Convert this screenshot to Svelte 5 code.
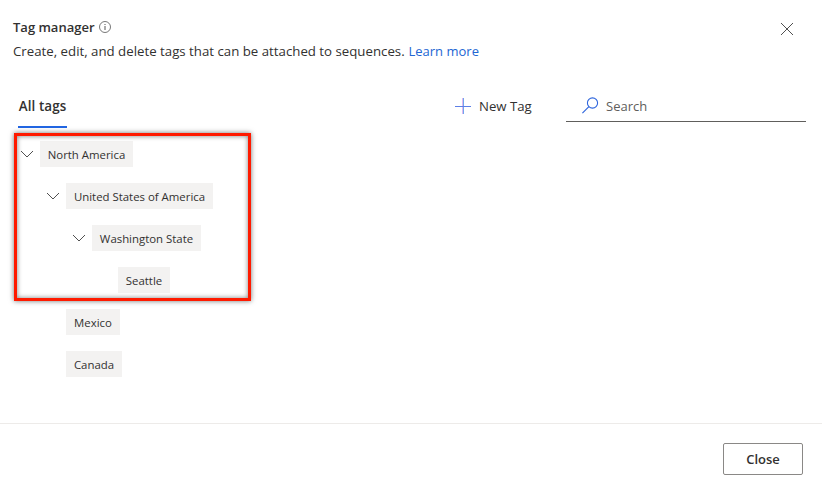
<script>
  const tags = [
    { name: 'North America', depth: 0, open: true, width: 93 },
    { name: 'United States of America', depth: 1, open: true, width: 147 },
    { name: 'Washington State', depth: 2, open: true, width: 109 },
    { name: 'Seattle', depth: 3, open: false, width: 52 },
    { name: 'Mexico', depth: 1, open: false, width: 54 },
    { name: 'Canada', depth: 1, open: false, width: 56 }
  ];
</script>

<div class="dialog">
  <header>
    <div class="heading">
      <div class="title">
        <h1>Tag manager</h1>
        <svg width="12" height="12" viewBox="0 0 12 12" fill="none" stroke="#555" stroke-width=".8">
          <circle cx="6" cy="6" r="5.5" />
          <path d="M6 5v4M6 3v1" stroke-width="1" />
        </svg>
      </div>
      <p><span class="description">Create, edit, and delete tags that can be attached to sequences.</span><a href="#learn">Learn more</a></p>
    </div>
    <button class="dismiss" aria-label="Dismiss">
      <svg width="14" height="14" viewBox="0 0 14 14" fill="none" stroke="#505050" stroke-width="1">
        <path d="M1 1l12 12M13 1L1 13" />
      </svg>
    </button>
  </header>

  <div class="toolbar">
    <div class="tab">All tags</div>
    <button class="new">
      <svg width="16" height="16" viewBox="0 0 16 16" fill="none" stroke-width="1">
        <path d="M7.5 0v16" stroke="#e0b8ee" />
        <path d="M8.5 0v16" stroke="#6fa6ee" />
        <path d="M0 8.5h16" stroke="#5d7fe6" />
      </svg>
      <span>New Tag</span>
    </button>
    <div class="search">
      <svg width="17" height="17" viewBox="0 0 17 17" fill="none" stroke="#2f66dd" stroke-width="1.1">
        <circle cx="10.5" cy="6" r="5.1" />
        <path d="M6.9 9.6L.4 16.1" />
      </svg>
      <span>Search</span>
    </div>
  </div>

  <main>
    <div class="frame"></div>
    {#each tags as tag}
      <div class="row" style:padding-left="{tag.depth * 26}px">
        <span class="chevron">
          {#if tag.open}
            <svg width="14" height="8" viewBox="0 0 14 8" fill="none" stroke="#505050" stroke-width="1">
              <path d="M1 1l6 6 6-6" />
            </svg>
          {/if}
        </span>
        <span class="chip" style:width="{tag.width}px">{tag.name}</span>
      </div>
    {/each}
  </main>

  <footer><button class="close">Close</button></footer>
</div>

<style>
  .dialog {
    width: 822px;
    height: 481px;
    box-sizing: border-box;
    overflow: hidden;
    display: flex;
    flex-direction: column;
    background: #fff;
    color: #323130;
    font: 13px/20px "Segoe UI", "Open Sans", "Noto Sans", sans-serif;
  }
  button {
    padding: 0;
    border: 0;
    background: none;
    font: inherit;
    color: inherit;
  }
  svg { display: block; flex: none; }
  header {
    height: 88px;
    padding: 17px 28px 0 13px;
    box-sizing: border-box;
    display: flex;
    justify-content: space-between;
    align-items: flex-start;
  }
  .title { display: flex; align-items: center; gap: 4px; height: 20px; }
  h1 { margin: 0; font-size: 13px; font-weight: 600; width: 82px; white-space: nowrap; }
  p { margin: 4px 0 0; display: flex; white-space: nowrap; }
  .description { width: 395.5px; font-size: 13.25px; }
  a { color: #2266d3; text-decoration: none; }
  .dismiss { margin-top: 5px; }
  .toolbar { height: 40px; display: flex; flex: none; padding-left: 18px; }
  .tab {
    width: 49px;
    height: 40px;
    box-sizing: border-box;
    border-bottom: 2px solid #2266e3;
    padding-top: 8px;
    font-size: 13.4px;
    font-weight: 600;
    letter-spacing: .1px;
    text-align: center;
    white-space: nowrap;
  }
  .new {
    display: flex;
    align-items: center;
    gap: 8px;
    height: 36px;
    margin-left: 388px;
    width: 111px;
    font-size: 13.2px;
    white-space: nowrap;
  }
  .search {
    width: 224px;
    height: 31px;
    padding: 2px 0 0 16px;
    display: flex;
    align-items: center;
    gap: 7px;
    border-bottom: 1px solid #605e5c;
    color: #605e5c;
  }
  main {
    position: relative;
    height: 295px;
    box-sizing: border-box;
    flex: none;
    padding: 13px 0 0 20px;
  }
  .frame {
    position: absolute;
    left: 14px;
    top: 5px;
    width: 231px;
    height: 162px;
    border: 3px solid #ff1a00;
    box-shadow: 0 0 5px rgba(0, 0, 0, .55), inset 0 0 5px rgba(0, 0, 0, .5);
  }
  .row { display: flex; align-items: center; height: 26px; margin-bottom: 16px; }
  .chevron { width: 20px; flex: none; }
  .chip {
    height: 26px;
    line-height: 27px;
    background: #f3f2f1;
    font-size: 11.4px;
    text-align: center;
    white-space: nowrap;
  }
  footer {
    flex: 1;
    border-top: 1px solid #edebe9;
    display: flex;
    justify-content: flex-end;
    align-items: flex-start;
    padding: 19px 19px 0 0;
  }
  .close {
    width: 80px;
    height: 32px;
    box-sizing: border-box;
    border: 1px solid #8a8886;
    border-radius: 2px;
    font-weight: 600;
  }
</style>
